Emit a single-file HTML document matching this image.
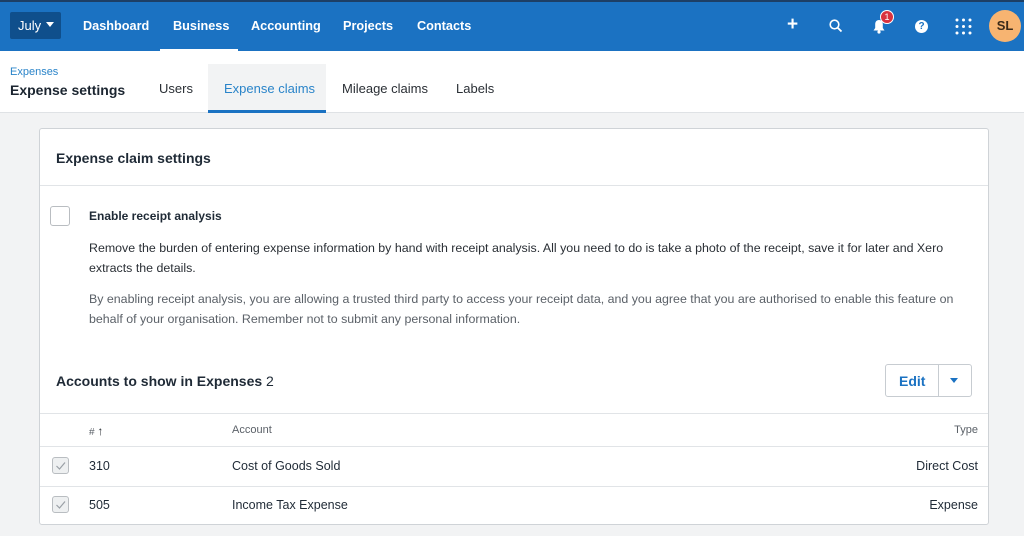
<!DOCTYPE html>
<html><head><style>
*{margin:0;padding:0;box-sizing:border-box}
body{width:1024px;height:536px;overflow:hidden;background:#f2f3f4;font-family:"Liberation Sans",Arial,sans-serif;position:relative;color:#1f2a36}
.a{position:absolute;white-space:nowrap}
.nav{position:absolute;left:0;top:0;width:1024px;height:51px;background:#1b72c2;border-top:2px solid #1d3f66}
.nv{position:absolute;top:17px;color:#fff;font-weight:bold;font-size:12.7px}
.sub{position:absolute;left:0;top:51px;width:1024px;height:62px;background:#fff;border-bottom:1px solid #dfe2e5}
.tab{position:absolute;top:81px;font-size:13px;color:#2a2f35}
.card{position:absolute;left:39px;top:128px;width:950px;height:397px;background:#fff;border:1px solid #cfd3d7;border-radius:3px}
.hr{position:absolute;left:0;width:948px;height:1px;background:#e1e4e7}
.t13{font-size:13px}
.cb{position:absolute;width:17px;height:17px;border:1px solid #b9bdc1;border-radius:3px;background:#eef0f1}
</style></head><body>
<div class="nav">
 <div class="a" style="left:10px;top:10px;width:51px;height:27px;background:#0f4f8c;border-radius:2px;color:#fff;font-size:13px;padding:6px 0 0 8px">July <span style="display:inline-block;border:4px solid transparent;border-top:5px solid #fff;vertical-align:-1px;margin-left:1px"></span></div>
 <div class="nv" style="left:83px">Dashboard</div>
 <div class="nv" style="left:173px">Business</div>
 <div class="a" style="left:160px;top:47px;width:78px;height:2px;background:#fff"></div>
 <div class="nv" style="left:251px">Accounting</div>
 <div class="nv" style="left:343px">Projects</div>
 <div class="nv" style="left:417px">Contacts</div>
 <div class="a" style="left:787px;top:12px;color:#fff;font-size:19px;font-weight:bold">+</div>
 <svg class="a" style="left:829px;top:17px" width="14" height="14" viewBox="0 0 14 14"><circle cx="5.5" cy="5.5" r="4.3" fill="none" stroke="#fff" stroke-width="1.6"/><path d="M8.7 8.7L12.5 12.5" stroke="#fff" stroke-width="1.8"/></svg>
 <svg class="a" style="left:872px;top:17px" width="14" height="15" viewBox="0 0 14 15"><path d="M7 1C4.5 1 3.2 3 3.2 5.3V9L1.5 11.5H12.5L10.8 9V5.3C10.8 3 9.5 1 7 1Z" fill="#fff"/><circle cx="7" cy="13" r="1.6" fill="#fff"/></svg>
 <div class="a" style="left:880px;top:8px;width:14px;height:14px;border-radius:50%;background:#d9323f;border:1px solid #fff;color:#fff;font-size:9px;text-align:center;line-height:12px">1</div>
 <div class="a" style="left:915px;top:18px;width:13px;height:13px;border-radius:50%;background:#fff;color:#1b72c2;font-size:10px;font-weight:bold;text-align:center;line-height:13px">?</div>
 <svg class="a" style="left:955px;top:16px" width="17" height="17"><g fill="#fff"><circle cx="2" cy="2" r="1.5"/><circle cx="8.5" cy="2" r="1.5"/><circle cx="15" cy="2" r="1.5"/><circle cx="2" cy="8.5" r="1.5"/><circle cx="8.5" cy="8.5" r="1.5"/><circle cx="15" cy="8.5" r="1.5"/><circle cx="2" cy="15" r="1.5"/><circle cx="8.5" cy="15" r="1.5"/><circle cx="15" cy="15" r="1.5"/></g></svg>
 <div class="a" style="left:989px;top:8px;width:32px;height:32px;border-radius:50%;background:#f7b471;color:#3a2a1a;font-weight:bold;font-size:13px;text-align:center;line-height:32px">SL</div>
</div>
<div class="sub">
 <div class="a" style="left:10px;top:15px;font-size:11px;color:#2a84c9">Expenses</div>
 <div class="a" style="left:10px;top:31px;font-size:14px;font-weight:bold;color:#1b2530">Expense settings</div>
 <div class="a" style="left:208px;top:13px;width:118px;height:49px;background:#f2f3f4;border-bottom:3px solid #1b72c2"></div>
</div>
<div class="tab" style="left:159px">Users</div>
<div class="tab" style="left:224px;color:#2a84c9">Expense claims</div>
<div class="tab" style="left:342px">Mileage claims</div>
<div class="tab" style="left:456px">Labels</div>
<div class="card">
 <div class="a" style="left:16px;top:21px;font-size:14px;font-weight:bold">Expense claim settings</div>
 <div class="hr" style="top:56px"></div>
 <div class="a" style="left:10px;top:77px;width:20px;height:20px;border:1px solid #b9bdc1;border-radius:3px;background:#fff"></div>
 <div class="a t13" style="left:49px;top:80px;font-weight:bold;font-size:12px">Enable receipt analysis</div>
 <div class="a" style="left:49px;top:109px;font-size:12.4px;line-height:20px;color:#2a2f35">Remove the burden of entering expense information by hand with receipt analysis. All you need to do is take a photo of the receipt, save it for later and Xero<br>extracts the details.</div>
 <div class="a" style="left:49px;top:160px;font-size:12.4px;line-height:20px;color:#5b6168">By enabling receipt analysis, you are allowing a trusted third party to access your receipt data, and you agree that you are authorised to enable this feature on<br>behalf of your organisation. Remember not to submit any personal information.</div>
 <div class="a" style="left:16px;top:244px;font-size:14px"><b>Accounts to show in Expenses</b> 2</div>
 <div class="a" style="left:845px;top:235px;width:87px;height:33px;border:1px solid #c7ccd1;border-radius:3px"></div>
 <div class="a" style="left:898px;top:235px;width:1px;height:33px;background:#c7ccd1"></div>
 <div class="a" style="left:859px;top:244px;font-size:14px;font-weight:bold;color:#1b72c2">Edit</div>
 <div class="a" style="left:910px;top:249px;border:4px solid transparent;border-top:5px solid #1b72c2"></div>
 <div class="hr" style="top:284px"></div>
 <div class="a" style="left:49px;top:295px;font-size:10px;color:#5b6168"># <b style="color:#2a2f35;font-size:12px">↑</b></div>
 <div class="a" style="left:192px;top:295px;font-size:11px;color:#5b6168">Account</div>
 <div class="a" style="right:10px;top:295px;font-size:11px;color:#5b6168">Type</div>
 <div class="hr" style="top:317px"></div>
 <div class="cb" style="left:12px;top:328px"><svg width="15" height="15"><path d="M3.5 8L6.5 11L12 4.5" fill="none" stroke="#9aa0a6" stroke-width="1.2"/></svg></div>
 <div class="a t13" style="left:49px;top:330px;font-size:12.5px">310</div>
 <div class="a t13" style="left:192px;top:330px;font-size:12.5px">Cost of Goods Sold</div>
 <div class="a t13" style="right:10px;top:330px;font-size:12.5px">Direct Cost</div>
 <div class="hr" style="top:357px"></div>
 <div class="cb" style="left:12px;top:367px"><svg width="15" height="15"><path d="M3.5 8L6.5 11L12 4.5" fill="none" stroke="#9aa0a6" stroke-width="1.2"/></svg></div>
 <div class="a t13" style="left:49px;top:369px;font-size:12.5px">505</div>
 <div class="a t13" style="left:192px;top:369px;font-size:12.5px">Income Tax Expense</div>
 <div class="a t13" style="right:10px;top:369px;font-size:12.5px">Expense</div>
</div>
</body></html>
